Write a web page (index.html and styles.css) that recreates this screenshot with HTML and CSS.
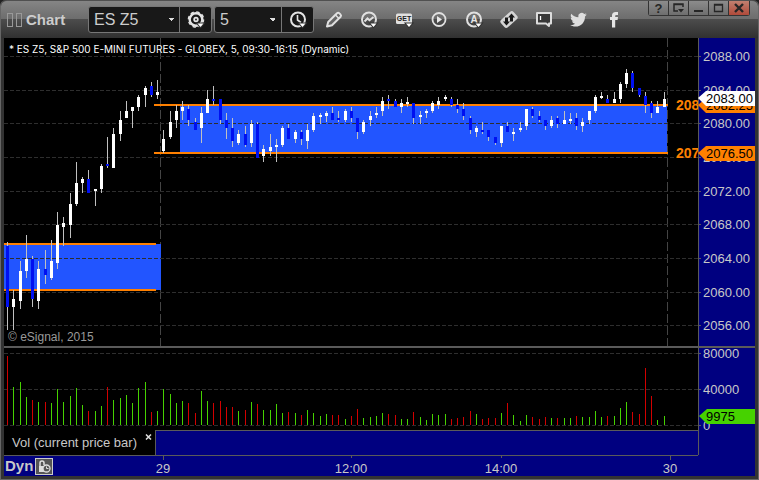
FILE: index.html
```html
<!DOCTYPE html>
<html lang="en">
<head>
    <meta charset="UTF-8">
    <meta name="viewport" content="width=device-width, initial-scale=1.0">
    <title>Chart - ES Z5</title>
    <link rel="stylesheet" href="styles.css">
</head>
<body>
    <div class="window">
        <header class="toolbar">
            <div class="grip"><i></i><i></i></div>
            <h1>Chart</h1>

            <div class="combo symbol">
                <select aria-label="Symbol"><option>ES Z5</option></select>
                <button aria-label="Symbol settings">
                    <svg width="20" height="20" viewBox="0 0 20 20">
                        <circle cx="10" cy="9.5" r="6.3" fill="none" stroke="#e4e4e4" stroke-width="2.4"/>
                        <circle cx="10" cy="9.5" r="7.6" fill="none" stroke="#e4e4e4" stroke-width="1.4" stroke-dasharray="3.4 2.57"/>
                        <circle cx="10" cy="9.5" r="1.8" fill="none" stroke="#e4e4e4" stroke-width="1.8"/>
                        <path class="drop" d="M11.5 13.5h6L14.5 17z"/>
                    </svg>
                </button>
            </div>
            <div class="combo interval">
                <select aria-label="Interval"><option>5</option></select>
                <button aria-label="Time template">
                    <svg width="20" height="20" viewBox="0 0 20 20">
                        <circle cx="10" cy="9.5" r="7" fill="none" stroke="#e4e4e4" stroke-width="2"/>
                        <path d="M9.5 5v5l3.5 2.5" fill="none" stroke="#e4e4e4" stroke-width="1.6"/>
                        <path class="drop" d="M11.5 13.5h6L14.5 17z"/>
                    </svg>
                </button>
            </div>

            <nav class="tools">
                <button aria-label="Draw">
                    <svg width="20" height="20" viewBox="0 0 20 20">
                        <path d="M3 16.5l1.200-4.500L13 3.200q1.200-1 2.400.2l1 1q1.200 1.200.2 2.400L8 15.200z" fill="#666" stroke="#e0e0e0" stroke-width="2" stroke-linejoin="round"/>
                        <path d="M11.500 5l3.500 3.500" stroke="#e0e0e0" stroke-width="1.500"/>
                    </svg>
                </button>
                <button aria-label="Studies">
                    <svg width="20" height="20" viewBox="0 0 20 20">
                        <circle cx="10" cy="9.5" r="7" fill="none" stroke="#e0e0e0" stroke-width="2"/>
                        <path d="M5.500 11.500l3-3 2 1.800L14.500 7" fill="none" stroke="#e0e0e0" stroke-width="2"/>
                        <path class="drop" d="M11.500 13.500h6L14.500 17z"/>
                    </svg>
                </button>
                <button aria-label="Get studies">
                    <svg width="20" height="20" viewBox="0 0 20 20">
                        <rect x="2" y="3.500" width="16" height="10.500" rx="1.500" fill="#e0e0e0"/>
                        <text class="get" x="10" y="11" text-anchor="middle">GET</text>
                        <path class="drop" d="M12 13.500h6L15 17z"/>
                    </svg>
                </button>
                <button aria-label="Replay">
                    <svg width="20" height="20" viewBox="0 0 20 20">
                        <circle cx="10" cy="9.5" r="6.5" fill="none" stroke="#e0e0e0" stroke-width="1.8"/>
                        <path d="M8 6v7l5-3.500z" fill="#e8e8e8"/>
                    </svg>
                </button>
                <button aria-label="Alerts">
                    <svg width="20" height="20" viewBox="0 0 20 20">
                        <circle cx="10" cy="9.5" r="7" fill="none" stroke="#e0e0e0" stroke-width="2"/>
                        <text class="alert" x="10" y="13" text-anchor="middle">A</text>
                        <path class="drop" d="M11.500 13.500h6L14.500 17z"/>
                    </svg>
                </button>
                <button aria-label="Trade">
                    <svg width="20" height="20" viewBox="0 0 20 20">
                        <rect x="1.500" y="4.500" width="17" height="10" rx="2.500" fill="#d4d4d4" transform="rotate(-42 10 9.500)"/>
                        <path d="M12.500 3.500l3.500 4h-2v4h-3v-4H9zM7.500 15.500l3.500-4H9v-4H6v4H4z" fill="#181818"/>
                    </svg>
                </button>
                <button aria-label="Comment">
                    <svg width="20" height="20" viewBox="0 0 20 20">
                        <path d="M3 3h14v10.500h-2V16l-3-2.500H3z" fill="#383838" stroke="#dcdcdc" stroke-width="2" stroke-linejoin="round"/>
                        <path d="M6.500 6v4" stroke="#fff" stroke-width="1.300"/>
                    </svg>
                </button>
                <button aria-label="Twitter">
                    <svg width="19" height="19" viewBox="0 0 24 24">
                        <path d="M22.500 5.800c-.8.400-1.600.6-2.500.7.900-.5 1.600-1.400 1.900-2.400-.8.500-1.800.9-2.700 1.100a4.300 4.300 0 0 0-7.400 3.900C8.200 8.900 5.100 7.200 3 4.600a4.300 4.300 0 0 0 1.300 5.800c-.7 0-1.400-.2-2-.5 0 2.100 1.500 3.900 3.500 4.300-.6.200-1.300.2-2 .1.600 1.700 2.100 2.900 4 3a8.700 8.700 0 0 1-6.400 1.800c1.900 1.200 4.200 1.900 6.600 1.900 8 0 12.500-6.800 12.200-12.900.9-.6 1.700-1.400 2.300-2.300z" fill="#dedede"/>
                    </svg>
                </button>
                <button aria-label="Facebook">
                    <svg width="20" height="20" viewBox="0 0 20 20">
                        <path d="M8 17.500V10H6V7h2V5.600C8 3.200 9.400 2 11.600 2H14v3h-1.500c-1 0-1.300.4-1.300 1.200V7H14l-.4 3h-2.400v7.500z" fill="#e6e6e6"/>
                    </svg>
                </button>
            </nav>

            <div class="window-buttons">
                <button aria-label="Help"><b>?</b></button>
                <button aria-label="Dock">
                    <svg width="12" height="10" viewBox="0 0 12 10"><path d="M5 8H1V1h9v3M1 1.500h9" fill="none" stroke="#262626" stroke-width="1.500"/><path d="M5 6h6L8 9.500z" fill="#262626"/></svg>
                </button>
                <button aria-label="Minimize">
                    <svg width="12" height="10" viewBox="0 0 12 10"><path d="M1 7h9v2H1z" fill="#262626"/></svg>
                </button>
                <button aria-label="Maximize">
                    <svg width="12" height="10" viewBox="0 0 12 10"><path d="M1.500 1.500h8v7h-8zM1 2h9" fill="none" stroke="#262626" stroke-width="1.300"/></svg>
                </button>
                <button class="close" aria-label="Close">
                    <svg width="12" height="10" viewBox="0 0 12 10"><path d="M2 1l8 8M10 1L2 9" stroke="#262626" stroke-width="2.400"/></svg>
                </button>
            </div>
        </header>

        <main class="chart">
            <!-- Price panel -->
            <svg class="panel" viewBox="4 38 751 308">
                <rect x="4" y="38" width="694" height="308" fill="#000"/>
                <path class="session" d="M160.500 38V346M667.500 38V346"/>
                <rect class="zone" x="4" y="244" width="157" height="46"/>
                <rect class="zone" x="180" y="105" width="487" height="48"/>
                <g id="priceGrid"></g>
                <path class="level" d="M4 244H156M4 290H156M154 105H668M154 153H668"/>
                <g id="candles"></g>
                <text class="title" x="9" y="53">* ES Z5, S&amp;P 500 E-MINI FUTURES - GLOBEX, 5, 09:30-16:15 (Dynamic)</text>
                <text class="credit" x="8" y="341">© eSignal, 2015</text>
                <text class="level-text" x="676" y="110">2082.25</text>
                <text class="level-text" x="676" y="158">2076.50</text>
                <rect x="698" y="38" width="57" height="308" fill="#000080"/>
                <path d="M698.500 38V346" stroke="#5a5a5a"/>
                <g id="priceAxis" class="axis"></g>
                <path d="M698 105l8-7h49v15h-49z" fill="#ff8000"/>
                <text class="tag" x="706" y="110">2082.25</text>
                <path d="M698 153l8-7h49v15h-49z" fill="#ff8000"/>
                <text class="tag" x="706" y="158">2076.50</text>
                <path d="M698 98l8-7h49v15h-49z" fill="#fff"/>
                <text class="tag" x="706" y="103">2083.00</text>
            </svg>

            <!-- Volume panel -->
            <svg class="panel volume" viewBox="4 348 751 82">
                <rect x="4" y="348" width="694" height="82" fill="#000"/>
                <g id="volumeGrid"></g>
                <g id="volume"></g>
                <rect x="698" y="348" width="57" height="82" fill="#000080"/>
                <path d="M698.500 348V430" stroke="#5a5a5a"/>
                <g id="volumeAxis" class="axis"></g>
                <path d="M699 416l8-7h48v15h-48z" fill="#46d200"/>
                <text class="tag" x="706" y="421">9975</text>
            </svg>

            <div class="tabs">
                <div class="tab">
                    <span>Vol (current price bar)</span>
                    <button aria-label="Close tab">
                        <svg width="7" height="6" viewBox="0 0 7 6"><path d="M1 .5l5 5M6 .5l-5 5" stroke="#ddd" stroke-width="1.500"/></svg>
                    </button>
                </div>
                <div class="tab-space"></div>
            </div>

            <footer class="time-bar">
                <div class="dynamic">
                    <strong>Dyn</strong>
                    <button aria-label="Lock time">
                        <svg width="16" height="15" viewBox="0 0 16 15">
                            <path d="M4 7V4q0-2 2-2t2 2v2" fill="none" stroke="#ddd" stroke-width="1.500"/>
                            <path d="M3 7h6v6H3z" fill="#ddd"/>
                            <circle cx="10.500" cy="9.500" r="3.500" fill="#555" stroke="#ddd" stroke-width="1.300"/>
                            <path d="M10.500 7.500v2h2" fill="none" stroke="#ddd"/>
                        </svg>
                    </button>
                </div>
                <svg class="time-axis" viewBox="104 455 651 21">
                    <path d="M104 455.500H698M163.500 455v5M351.500 455v3M501.500 455v3M670.500 455v5" stroke="#5a5a5a"/>
                    <g class="axis" text-anchor="middle">
                        <text x="163" y="473">29</text>
                        <text x="351" y="473">12:00</text>
                        <text x="501" y="473">14:00</text>
                        <text x="670" y="473">30</text>
                    </g>
                </svg>
            </footer>
        </main>
    </div>

    <script src="chart.js"></script>
</body>
</html>
```

FILE: styles.css
```css
body {
    margin: 0;
    background-color: #222;
    font-family: "Liberation Sans", Arial, sans-serif;
    color: #c8c8c8;
}

button {
    display: flex;
    align-items: center;
    justify-content: center;
    padding: 0;
    border: 0;
    background: none;
    color: inherit;
    cursor: pointer;
}

svg {
    display: block;
}

.window {
    box-sizing: border-box;
    min-height: 100vh;
    padding: 0 3px 3px;
    background-color: #333;
    border: 1px solid #666;
    border-top: 0;
    border-radius: 6px 6px 0 0;
}

/* Toolbar */
.toolbar {
    display: flex;
    align-items: center;
    height: 38px;
    margin: 0 -3px;
    padding: 0 8px 0 6px;
    box-sizing: border-box;
    background: linear-gradient(#858585, #6c6c6c 50%, #4c4c4c 50%, #303030);
    border-top: 1px solid #505050;
    border-radius: 6px 6px 0 0;
}

.grip {
    display: flex;
    gap: 3px;
}

.grip i {
    width: 4px;
    height: 12px;
    border: 1px solid #999;
}

.toolbar h1 {
    margin: 0 0 0 4px;
    width: 62px;
    font-size: 15px;
    line-height: 18px;
    color: #ccc;
}

.combo {
    display: flex;
    box-sizing: border-box;
    height: 27px;
    margin-right: 2px;
    background-color: #181818;
    border: 1px solid #777;
    border-radius: 3px;
}

.combo select {
    width: 91px;
    padding: 0 5px;
    border: 0;
    border-right: 1px solid #777;
    appearance: none;
    color: #ccc;
    font-family: inherit;
    font-size: 16px;
    background: conic-gradient(from 315deg at 50% 100%, #ddd 90deg, transparent 0) right 5px center / 6px 3px no-repeat;
}

.interval select {
    width: 67px;
}

.combo button {
    width: 31px;
}

.tools {
    display: flex;
}

.tools button {
    width: 35px;
    height: 27px;
}

.drop {
    fill: #fff;
    stroke: #333;
    stroke-width: 2;
    paint-order: stroke;
}

.get {
    font-size: 7px;
    font-weight: bold;
    fill: #222;
}

.alert {
    font-size: 10px;
    font-weight: bold;
    fill: #e8e8e8;
}

.window-buttons {
    display: flex;
    align-self: flex-start;
    margin-left: auto;
    border: 1px solid #333;
    border-top: 0;
    border-radius: 0 0 3px 3px;
}

.window-buttons button {
    width: 20px;
    height: 14px;
    box-sizing: border-box;
    border-right: 1px solid #333;
    background: linear-gradient(#8c8c8c, #6e6e6e);
    color: #262626;
    font-size: 13px;
    line-height: 13px;
}

.window-buttons .close {
    border-right: 0;
    background: linear-gradient(#c08070, #b04a3a);
}

/* Chart panels */
.chart {
    background-color: #000080;
}

.panel {
    width: 100%;
    height: auto;
}

.volume {
    border-top: 2px solid #5a5a5a;
    overflow: visible;
}

.zone {
    fill: #2255ff;
}

.grid {
    stroke: #2e2e2e;
    stroke-dasharray: 4 2;
}

.session {
    stroke: #444;
    stroke-dasharray: 9 3;
}

.level {
    stroke: #ff8000;
    stroke-width: 2;
}

.level-text {
    font-size: 14px;
    font-weight: bold;
    fill: #ff8000;
}

.title {
    font-family: Inter, "Liberation Sans", sans-serif;
    font-size: 10px;
    fill: #fff;
}

.credit {
    font-size: 12px;
    fill: #999;
}

.axis {
    font-size: 13px;
    fill: #c8c8c8;
}

.tag {
    font-size: 13px;
    fill: #000;
}

/* Study tabs */
.tabs {
    display: flex;
    height: 25px;
    padding-right: 56px;
}

.tab {
    display: flex;
    justify-content: space-between;
    box-sizing: border-box;
    width: 152px;
    padding: 3px 3px 0 8px;
    background-color: #000;
    border-right: 1px solid #5a5a5a;
    font-size: 13px;
    line-height: 20px;
}

.tab button {
    height: 7px;
}

.tab-space {
    flex: 1;
    border-top: 1px solid #5a5a5a;
    border-right: 1px solid #5a5a5a;
}

/* Time bar */
.time-bar {
    display: flex;
}

.dynamic {
    display: flex;
    align-items: center;
    gap: 2px;
    box-sizing: border-box;
    width: 100px;
    padding-left: 1px;
    border-top: 1px solid #5a5a5a;
    font-size: 15px;
    line-height: 20px;
}

.dynamic button {
    width: 18px;
    height: 17px;
    background-color: #555;
    border: 1px solid #ccc;
}

.time-axis {
    flex: 1;
    min-width: 0;
}
```

FILE: chart.js
```js
const SVG_NS = 'http://www.w3.org/2000/svg';

// [high, body top, body bottom, low, direction]
const candles = [
    [242, 246, 307, 330, 'd'], [290, 299, 307, 330, 'u'], [261, 271, 301, 309, 'u'], [235, 259, 271, 278, 'u'],
    [256, 259, 299, 307, 'd'], [261, 269, 301, 309, 'u'], [250, 269, 275, 284, 'd'], [240, 261, 278, 280, 'u'],
    [212, 225, 263, 269, 'u'], [217, 223, 227, 246, 'u'], [193, 204, 225, 238, 'u'], [162, 183, 204, 206, 'u'],
    [177, 179, 183, 193, 'u'], [170, 179, 193, 193, 'd'], [189, 189, 191, 206, 'u'], [164, 166, 189, 193, 'u'],
    [137, 164, 166, 168, 'd'], [128, 134, 168, 168, 'u'], [111, 120, 134, 141, 'u'], [101, 111, 118, 118, 'u'],
    [107, 107, 111, 128, 'u'], [95, 97, 107, 111, 'u'], [86, 88, 95, 107, 'u'], [82, 86, 95, 97, 'd'],
    [80, 92, 95, 99, 'u'], [130, 139, 151, 153, 'u'], [111, 122, 137, 139, 'u'], [105, 111, 120, 128, 'u'],
    [101, 107, 111, 120, 'u'], [105, 109, 120, 126, 'd'], [118, 122, 130, 130, 'd'], [107, 113, 128, 143, 'u'],
    [90, 99, 113, 113, 'u'], [86, 99, 101, 105, 'd'], [99, 99, 120, 124, 'd'], [113, 120, 128, 139, 'd'],
    [118, 128, 141, 147, 'd'], [130, 134, 143, 145, 'u'], [126, 134, 145, 147, 'd'], [120, 124, 143, 147, 'u'],
    [122, 124, 158, 158, 'd'], [145, 149, 156, 162, 'u'], [134, 147, 151, 156, 'u'], [139, 145, 147, 162, 'u'],
    [126, 128, 145, 147, 'u'], [124, 128, 139, 139, 'd'], [130, 132, 139, 143, 'u'], [130, 132, 139, 145, 'd'],
    [124, 130, 141, 149, 'u'], [113, 116, 130, 132, 'u'], [113, 115, 117, 124, 'u'], [111, 113, 116, 122, 'u'],
    [107, 113, 120, 120, 'd'], [111, 118, 120, 122, 'd'], [109, 111, 120, 122, 'u'], [107, 111, 118, 122, 'd'],
    [118, 118, 132, 139, 'd'], [120, 122, 132, 134, 'u'], [111, 116, 120, 126, 'u'], [107, 113, 115, 118, 'u'],
    [97, 101, 111, 116, 'u'], [95, 99, 101, 109, 'd'], [99, 101, 107, 107, 'd'], [99, 103, 107, 113, 'u'],
    [97, 102, 104, 107, 'u'], [103, 103, 118, 124, 'd'], [111, 115, 117, 124, 'u'], [109, 111, 113, 118, 'u'],
    [101, 103, 111, 113, 'u'], [97, 101, 105, 109, 'u'], [95, 97, 99, 101, 'u'], [97, 99, 105, 107, 'd'],
    [99, 105, 109, 113, 'd'], [103, 109, 116, 120, 'd'], [116, 118, 130, 134, 'd'], [126, 128, 132, 137, 'u'],
    [122, 130, 132, 134, 'd'], [130, 130, 137, 141, 'd'], [137, 137, 143, 145, 'd'], [126, 126, 143, 147, 'u'],
    [122, 126, 132, 132, 'd'], [128, 132, 134, 141, 'u'], [122, 128, 130, 132, 'u'], [109, 109, 126, 130, 'u'],
    [107, 109, 116, 118, 'd'], [111, 116, 120, 122, 'd'], [120, 120, 126, 130, 'd'], [116, 120, 126, 128, 'u'],
    [116, 118, 124, 128, 'd'], [111, 120, 124, 124, 'u'], [113, 119, 121, 124, 'u'], [113, 118, 126, 130, 'd'],
    [118, 122, 126, 132, 'u'], [111, 111, 120, 124, 'u'], [95, 97, 111, 113, 'u'], [92, 96, 98, 99, 'u'],
    [95, 99, 103, 103, 'd'], [92, 99, 103, 103, 'u'], [82, 84, 99, 103, 'u'], [69, 73, 84, 88, 'u'],
    [71, 73, 88, 92, 'd'], [88, 88, 95, 97, 'd'], [92, 96, 105, 113, 'd'], [101, 103, 113, 118, 'd'],
    [101, 107, 113, 113, 'u'], [92, 99, 107, 107, 'u']
];

// Bar heights, negative for a down bar
const volumes = [
    -69, 38, 43, 28, -25, 23, -23, 22, 36, 23, 29, 37, 20, -14, 14, 19, -38, 25, 27, 30, 22, 37, 43, -13, 14,
    36, 31, 22, 24, -22, -12, 34, 24, -22, -24, -18, -18, 14, -15, 23, -21, 15, 15, 21, 12, -13, 12, -10,
    15, 12, 9, 11, -10, -10, 6, -9, -16, 7, 8, 9, 12, -11, -10, 6, 6, -13, 8, 5, 11, 10, 11, -6, -7, -8,
    -14, 11, -6, -7, -7, 12, -22, 10, 4, 10, -8, -6, -8, 7, -7, 7, 7, -9, 8, 8, 14, 8, -9, 9, 17, 23,
    -13, -11, -57, -29, 5, 9
];

function add(parent, tag, attrs, text) {
    const el = document.createElementNS(SVG_NS, tag);
    for (const name in attrs) {
        el.setAttribute(name, attrs[name]);
    }
    if (text) {
        el.textContent = text;
    }
    document.getElementById(parent).appendChild(el);
}

function barX(i) {
    return Math.floor(7.5 + i * 6.253);
}

// Grid lines and axis labels
function drawScale(grid, axis, rows) {
    rows.forEach(([y, label]) => {
        add(grid, 'path', { class: 'grid', d: `M4 ${y + 0.5}H698` });
        add(axis, 'path', { stroke: '#5a5a5a', d: `M698 ${y + 0.5}h3` });
        add(axis, 'text', { x: 703, y: y + 5 }, label);
    });
}

drawScale('priceGrid', 'priceAxis', [
    [56, '2088.00'], [90, '2084.00'], [123, '2080.00'], [157, '2076.00'], [191, '2072.00'],
    [224, '2068.00'], [258, '2064.00'], [292, '2060.00'], [325, '2056.00']
]);
drawScale('volumeGrid', 'volumeAxis', [[353, '80000'], [389, '40000'], [425, '0']]);

candles.forEach(([high, top, bottom, low, dir], i) => {
    const x = barX(i);
    add('candles', 'rect', { x: x, y: high, width: 1, height: low - high, fill: '#c0c0c0' });
    add('candles', 'rect', { x: x - 1, y: top, width: 3, height: bottom - top, fill: dir === 'u' ? '#fff' : '#0010f0' });
});

volumes.forEach((v, i) => {
    const h = Math.abs(v);
    add('volume', 'rect', { x: barX(i), y: 425 - h, width: 1, height: h, fill: v > 0 ? '#46d200' : '#d20000' });
});
```
